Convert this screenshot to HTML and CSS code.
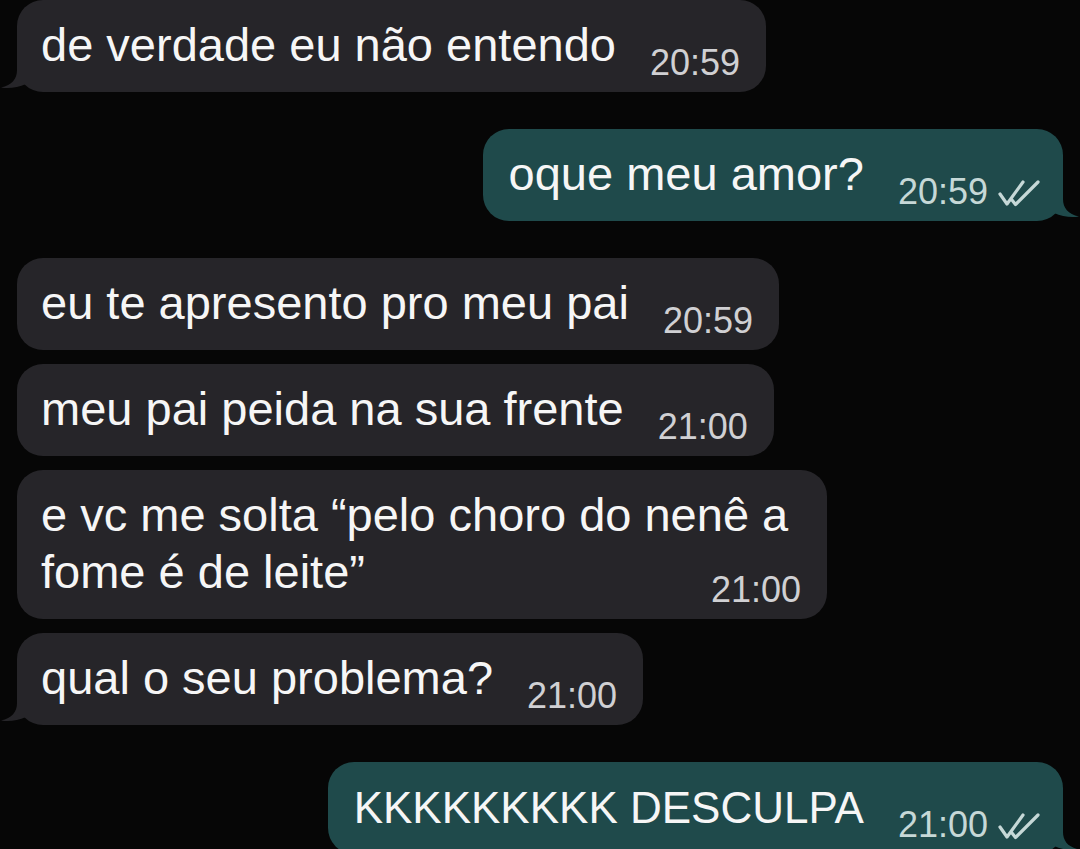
FILE: index.html
```html
<!DOCTYPE html>
<html lang="pt">
<head>
<meta charset="utf-8">
<title>Conversa</title>
<link rel="stylesheet" href="styles.css">
</head>
<body>
<div class="chat">
  <div class="row in">
    <div class="bubble in has-tail">
      <svg class="tail" viewBox="0 0 30 30" aria-hidden="true"><path d="M17,0 L17,8 C17,17 12,23 1,25.5 C9,27 18,25.5 26,22 L26,0 Z"/></svg>
      <span class="text">de verdade eu não entendo</span><span class="time">20:59</span>
    </div>
  </div>

  <div class="row out group-start">
    <div class="bubble out has-tail">
      <span class="text">oque meu amor?</span><span class="time">20:59<svg class="ticks" viewBox="0 0 42 28" aria-hidden="true"><path d="M2,15 L9,25 L25,3 M14,21 L17.5,25.5 L40,3"/></svg></span>
      <svg class="tail" viewBox="0 0 30 30" aria-hidden="true"><path d="M13,0 L13,8 C13,17 18,23 29,25.5 C21,27 12,25.5 4,22 L4,0 Z"/></svg>
    </div>
  </div>

  <div class="row in group-start">
    <div class="bubble in">
      <span class="text">eu te apresento pro meu pai</span><span class="time">20:59</span>
    </div>
  </div>

  <div class="row in">
    <div class="bubble in">
      <span class="text">meu pai peida na sua frente</span><span class="time">21:00</span>
    </div>
  </div>

  <div class="row in">
    <div class="bubble in">
      <span class="text">e vc me solta “pelo choro do nenê a</span> <span class="text">fome é de leite”</span><span class="time">21:00</span>
    </div>
  </div>

  <div class="row in">
    <div class="bubble in has-tail">
      <svg class="tail" viewBox="0 0 30 30" aria-hidden="true"><path d="M17,0 L17,8 C17,17 12,23 1,25.5 C9,27 18,25.5 26,22 L26,0 Z"/></svg>
      <span class="text">qual o seu problema?</span><span class="time">21:00</span>
    </div>
  </div>

  <div class="row out group-start">
    <div class="bubble out has-tail">
      <span class="text caps">KKKKKKKKK DESCULPA</span><span class="time">21:00<svg class="ticks" viewBox="0 0 42 28" aria-hidden="true"><path d="M2,15 L9,25 L25,3 M14,21 L17.5,25.5 L40,3"/></svg></span>
      <svg class="tail" viewBox="0 0 30 30" aria-hidden="true"><path d="M13,0 L13,8 C13,17 18,23 29,25.5 C21,27 12,25.5 4,22 L4,0 Z"/></svg>
    </div>
  </div>
</div>
</body>
</html>
```

FILE: styles.css
```css
html, body {
  margin: 0;
  padding: 0;
  background: #060606;
  height: 100%;
  overflow: hidden;
}

body {
  font-family: "Liberation Sans", Arial, sans-serif;
  color: #f6f6f6;
}

.chat {
  display: flex;
  flex-direction: column;
  gap: 14px;
  padding: 0 17px;
}

.row {
  display: flex;
}

.row.in {
  justify-content: flex-start;
}

.row.out {
  justify-content: flex-end;
}

.row.group-start {
  margin-top: 23px;
}

.bubble {
  position: relative;
  box-sizing: border-box;
  display: flow-root;
  max-width: 810px;
  border-radius: 26px;
  padding: 16px 26px 12px 24px;
  font-size: 47px;
  line-height: 57px;
}

.bubble.in {
  background: #262529;
}

.bubble.out {
  background: #1f4a4b;
  padding: 16px 23px 12px 26px;
}

.text.caps {
  font-size: 44px;
}

.time {
  float: right;
  margin: 30px 0 0 34px;
  font-size: 36px;
  line-height: 34px;
  white-space: nowrap;
}

.bubble.in .time {
  color: #d0d0d3;
}

.bubble.out .time {
  color: #c6d8d7;
}

.ticks {
  width: 42px;
  height: 28px;
  margin-left: 10px;
  vertical-align: -3px;
  fill: none;
  stroke: #c6d8d7;
  stroke-width: 3.2;
  stroke-linecap: round;
  stroke-linejoin: round;
}

.tail {
  position: absolute;
  bottom: 0;
  width: 30px;
  height: 30px;
}

.bubble.in .tail {
  left: -17px;
  fill: #262529;
}

.bubble.out .tail {
  right: -17px;
  fill: #1f4a4b;
}
```
